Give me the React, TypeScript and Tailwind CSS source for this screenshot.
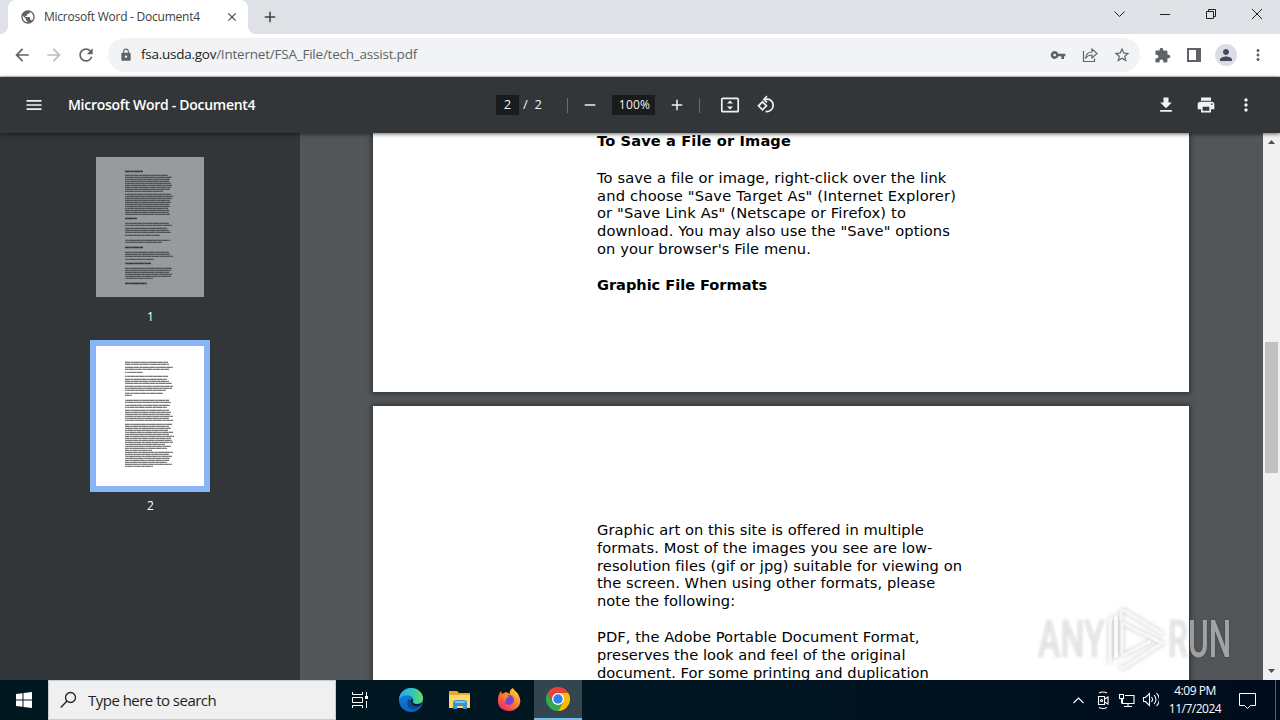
import type { ReactNode } from 'react';
import {
  MdAdd, MdArrowBack, MdArrowForward, MdClose, MdExtension, MdFileDownload, MdLock, MdMenu, MdMoreVert,
  MdPerson, MdPrint, MdPublic, MdRefresh, MdRemove, MdStarBorder, MdVpnKey,
} from 'react-icons/md';

function Cell({ className, children }: { className: string; children?: ReactNode }) {
  return <div className={`flex shrink-0 items-center justify-center ${className}`}>{children}</div>;
}

function TabStrip() {
  return (
    <div className="flex h-[34px] shrink-0 bg-[#dee1e6] text-[#3c4043]">
      <div className="flex w-2 items-end bg-white"><div className="h-full w-full rounded-br-lg bg-[#dee1e6]" /></div>
      <div className="flex w-60 items-center rounded-t-lg bg-white">
        <MdPublic className="ml-3 size-4 text-[#5f6368]" />
        <span className="ml-2 w-[173px] whitespace-nowrap font-['Open_Sans',sans-serif] text-[12px] tracking-[-0.24px]">Microsoft Word - Document4</span>
        <MdClose className="ml-2 size-3.5 text-[#45494d]" />
      </div>
      <div className="w-2 bg-white"><div className="h-full w-full rounded-bl-lg bg-[#dee1e6]" /></div>
      <Cell className="w-7"><MdAdd className="size-[18px]" /></Cell>
      <div className="flex-1" />
      <svg className="h-[34px] w-[172px]" viewBox="0 0 172 34" fill="none" stroke="#202124">
        <path d="M6.500 11.500l5 5 5-5M52 14.500h10M98.500 11.500h7v7h-7zM100.500 11.500v-2h7v7h-2M144 9l10 10M154 9l-10 10" />
      </svg>
    </div>
  );
}

function AddressBar() {
  return (
    <div className="flex h-[43px] shrink-0 items-center border-b border-[#d5d7da] bg-white text-[#5f6368]">
      <Cell className="ml-1.5 w-8"><MdArrowBack className="size-5" /></Cell>
      <Cell className="w-8"><MdArrowForward className="size-5 text-[#babcbe]" /></Cell>
      <Cell className="w-8"><MdRefresh className="size-5" /></Cell>
      <div className="ml-1.5 flex h-[34px] w-[1032px] items-center rounded-full bg-[#f1f3f4]">
        <MdLock className="ml-[11px] size-3.5" />
        <span className="mb-px ml-2 flex-1 whitespace-nowrap font-['Open_Sans',sans-serif] text-[13.5px] tracking-[-0.22px]">
          <span className="tracking-[-0.26px] text-[#202124]">fsa.usda.gov</span>/Internet/FSA_File/tech_assist.pdf
        </span>
        <Cell className="w-8"><MdVpnKey className="size-4" /></Cell>
        <Cell className="w-8">
          <svg className="size-4" viewBox="0 0 16 16" fill="none" stroke="currentColor" strokeWidth="1.2">
            <path d="M1.500 4v10.500h11v-3" />
            <path d="M3.500 11.500c.5-4.500 3-6.500 6.500-6.500V2l5 4.500-5 4.500V8c-3 0-5 1-6.500 3.500z" />
          </svg>
        </Cell>
        <Cell className="mr-0.5 w-8"><MdStarBorder className="size-[18px]" /></Cell>
      </div>
      <Cell className="ml-[6px] w-8"><MdExtension className="size-[17px]" /></Cell>
      <Cell className="w-8">
        <svg className="h-3.5 w-3.5" viewBox="0 0 14 14"><path fill="currentColor" fillRule="evenodd" d="M0 0h14v14H0zM2 2v10h7V2z" /></svg>
      </Cell>
      <Cell className="w-8"><Cell className="size-[22px] rounded-full bg-[#dadce6]"><MdPerson className="size-[18px] text-[#45495e]" /></Cell></Cell>
      <Cell className="w-8"><MdMoreVert className="size-[18px]" /></Cell>
    </div>
  );
}

function ViewerToolbar() {
  return (
    <div className="relative z-10 flex h-14 shrink-0 items-center bg-[#323639] font-['Open_Sans',sans-serif] text-[13px] text-[#f1f1f1] shadow-[0_1px_4px_rgba(0,0,0,0.6)]">
      <Cell className="ml-6 w-5"><MdMenu className="size-[22px]" /></Cell>
      <span className="mb-px ml-6 w-[428px] whitespace-nowrap text-[14px] font-semibold tracking-[-0.29px] text-white">Microsoft Word - Document4</span>
      <Cell className="h-5 w-[23px] bg-[#191b1c]">2</Cell>
      <span className="ml-1 w-[44px] whitespace-pre">/&nbsp; 2</span>
      <div className="h-[15px] w-px bg-[#6b6e70]" />
      <Cell className="ml-3 w-5"><MdRemove className="size-[18px]" /></Cell>
      <Cell className="ml-3 h-5 w-[43px] bg-[#191b1c] pl-0.5 text-[12px] tracking-[0.2px]">100%</Cell>
      <Cell className="ml-3 w-5"><MdAdd className="size-[18px]" /></Cell>
      <div className="ml-3 h-[15px] w-px bg-[#6b6e70]" />
      <Cell className="ml-5 w-5">
        <svg className="size-5" viewBox="0 0 20 20">
          <rect x="1.800" y="3.300" width="16.400" height="13.400" rx="1" fill="none" stroke="currentColor" strokeWidth="1.700" />
          <path fill="currentColor" d="M7 8.500l3-3 3 3zM7 11.500h6l-3 3z" />
        </svg>
      </Cell>
      <Cell className="ml-4 w-5">
        <svg className="size-5" viewBox="0 0 20 20" fill="none" stroke="currentColor" strokeWidth="1.700">
          <path d="M6.500 6.800l4 4-4 4-4-4z" />
          <path d="M9 4.400c5-1 8.200 2 8.200 5.800 0 4-3.600 7-7.700 6.300" />
          <path d="M11 1.200L7.900 4.400 11 7.400" />
        </svg>
      </Cell>
      <div className="flex-1" />
      <Cell className="w-10"><MdFileDownload className="size-5" /></Cell>
      <Cell className="w-10"><MdPrint className="size-5" /></Cell>
      <Cell className="mr-[14px] w-10"><MdMoreVert className="size-5" /></Cell>
    </div>
  );
}

type Row = [number, number, number?];

const firstPage: Row[] = [
  [14, 18, 1], [18, 43], [20, 47], [22, 45], [24, 44], [26, 46], [28, 47], [30, 46], [32, 45], [34, 38],
  [37, 46], [39, 48], [41, 47], [43, 45], [45, 46], [47, 44], [49, 45], [51, 43], [53, 44], [55, 44], [57, 45],
  [61, 12, 1], [66, 44], [68, 47], [71, 42], [73, 44], [75, 46], [78, 35], [83, 45], [85, 37], [90, 18, 1],
  [95, 44], [97, 45], [99, 48], [102, 29], [106, 26, 1], [111, 47], [113, 46], [115, 44], [117, 47], [119, 46],
  [121, 28], [126, 22, 1],
];
const secondPage: Row[] = [
  [16, 43], [18, 44], [21, 48], [23, 44], [26, 18], [30, 43], [33, 42], [35, 44], [37, 47], [40, 48],
  [42, 47], [44, 41], [47, 38], [49, 7], [54, 44], [56, 46], [59, 45], [61, 42], [64, 44], [66, 46], [68, 45],
  [70, 48], [72, 44], [74, 48], [78, 47], [80, 44], [82, 46], [84, 43], [86, 48], [88, 44], [90, 49],
  [92, 46], [94, 47], [96, 48], [98, 40], [100, 46], [102, 42], [104, 27], [106, 48], [108, 44], [110, 47],
  [112, 45], [114, 44], [116, 42], [118, 47], [120, 28],
];

function Thumb({ rows, dark }: { rows: Row[]; dark?: boolean }) {
  return (
    <svg className={dark ? 'h-[140px] w-[108px] bg-[#989b9d]' : 'h-[140px] w-[108px] bg-white'} viewBox="0 0 108 140">
      {rows.map(([y, w, bold], i) => (
        <g key={y} stroke={dark ? '#16181a' : '#111'} strokeWidth={bold ? 1.5 : 1.1}>
          <line x1="29" x2={29 + w} y1={y + 0.4} y2={y + 0.4} strokeOpacity={bold ? 0.5 : 0.38} />
          <line
            x1="29" x2={29 + w} y1={y + 0.4} y2={y + 0.4} strokeOpacity={bold ? 0.5 : 0.3}
            strokeDasharray={i % 2 ? '3 .9 5 1.3 2 .7 4 1.1' : '5 1.2 2 .9 6.3 .8'} strokeDashoffset={(i * 3.7) % 11}
          />
        </g>
      ))}
    </svg>
  );
}

function Sidebar() {
  return (
    <div className="flex w-[300px] shrink-0 flex-col items-center bg-[#323639] pt-6 font-['Open_Sans',sans-serif] text-[12px] text-white">
      <Thumb rows={firstPage} dark />
      <div className="mt-3 h-[31px] pl-px leading-4">1</div>
      <div className="bg-[#8ab4f8] p-1.5"><Thumb rows={secondPage} /></div>
      <div className="mt-[6px] pl-px leading-4">2</div>
    </div>
  );
}

const sheet = "w-[816px] shrink-0 bg-white pl-56 font-['DejaVu_Sans',sans-serif] text-[14.67px] leading-[17.75px] whitespace-nowrap text-black shadow-[0_0_5px_2px_rgba(0,0,0,0.35)]";

function Line({ className, children }: { className: string; children: ReactNode }) {
  return <div className={className}>{children}</div>;
}

function Pages() {
  return (
    <div className="flex w-[963px] flex-col overflow-hidden bg-[#525659] pl-[73px]">
      <div className={`h-[259px] ${sheet}`}>
        <div className="-mt-px text-[14.6px] font-bold tracking-[0.13px]">To Save a File or Image</div>
        <div className="mt-[19px]">
          <Line className="tracking-[0.12px]">To save a file or image, right-click over the link</Line>
          <Line className="tracking-[0.18px]">and choose "Save Target As" (Internet Explorer)</Line>
          <Line className="tracking-[0.14px]">or "Save Link As" (Netscape or Firefox) to</Line>
          <Line className="tracking-[0.1px]">download. You may also use the "Save" options</Line>
          <Line className="tracking-[0.1px]">on your browser's File menu.</Line>
        </div>
        <div className="mt-[18.2px] text-[14.6px] font-bold tracking-[-0.04px]">Graphic File Formats</div>
      </div>
      <div className={`mt-3.5 h-[400px] pt-[115px] ${sheet}`}>
        <Line className="tracking-[0.065px]">Graphic art on this site is offered in multiple</Line>
        <Line className="tracking-[0.09px]">formats. Most of the images you see are low-</Line>
        <Line className="tracking-[0.085px]">resolution files (gif or jpg) suitable for viewing on</Line>
        <Line className="tracking-[0.07px]">the screen. When using other formats, please</Line>
        <Line className="tracking-[0.05px]">note the following:</Line>
        <div className="mt-[18.5px]">
          <Line className="tracking-[0.075px]">PDF, the Adobe Portable Document Format,</Line>
          <Line className="tracking-[0.035px]">preserves the look and feel of the original</Line>
          <Line className="tracking-[0.03px]">document. For some printing and duplication</Line>
        </div>
      </div>
    </div>
  );
}

function Scrollbar() {
  return (
    <div className="flex w-[17px] shrink-0 flex-col items-center bg-[#f1f1f1]">
      <svg className="h-[17px] w-[17px]" viewBox="0 0 17 17"><path fill="#505050" d="M5 11l3.500-4 3.500 4z" /></svg>
      <div className="mt-[192px] h-[131px] w-[13px] bg-[#c1c1c1]" />
      <div className="flex-1" />
      <svg className="h-[17px] w-[17px]" viewBox="0 0 17 17"><path fill="#505050" d="M5 6l3.500 4L12 6z" /></svg>
    </div>
  );
}

function Watermark() {
  return (
    <div className="absolute top-[608px] left-[1038px] z-20 flex h-16 w-[196px] items-center font-['Roboto',sans-serif] text-[52px] leading-none font-medium text-white/50 [text-shadow:0_0_3px_rgba(0,0,0,0.22)]">
      <div className="w-[67px]"><span className="inline-block origin-left scale-x-[0.65]">ANY</span></div>
      <svg className="h-16 w-[63px] shrink-0 overflow-visible drop-shadow-[0_0_2px_rgba(0,0,0,0.3)]" viewBox="0 0 63 64" fill="none" stroke="white" strokeOpacity="0.7" strokeWidth="3.500">
        <path d="M5 55V14c0-2 1-3 3-4" />
        <path d="M11 50V7" />
        <path d="M11 50V8M16 12V4c0-2 2-3 4-1l38 23" />
        <path d="M17 46V15l40 20-37 24c-3 2-5 1-5-2" />
        <path d="M17 48l29-15" />
      </svg>
      <div className="w-[65px]"><span className="inline-block origin-left scale-x-[0.61]">RUN</span></div>
    </div>
  );
}

function Edge() {
  return (
    <svg className="size-6" viewBox="0 0 24 24">
      <defs>
        <linearGradient id="edgeTop" x1="0" x2="1"><stop stopColor="#2aa8ee" /><stop offset=".6" stopColor="#30c9b4" /><stop offset="1" stopColor="#70db57" /></linearGradient>
        <linearGradient id="edgeBase" x1="0" x2="0" y1="0" y2="1"><stop stopColor="#168bdc" /><stop offset="1" stopColor="#0962c6" /></linearGradient>
      </defs>
      <circle cx="12" cy="12" r="12" fill="url(#edgeBase)" />
      <path d="M0 11C1 4 6 0 12 0c7 0 12 5 12 10 0 4-3 6-6 6-3 0-5-1-4-3 2-5-7-9-14-2z" fill="url(#edgeTop)" />
      <path d="M9 11c-3 6 2 12 8 10 3-1 4-3 5-4-5 3-11 0-10-5z" fill="#114a8b" />
      <path d="M14 13c-1 2 1 3 4 3s4-1 5-2l-1 3c-5 3-11 0-10-5 0-1 3-1 2 1z" fill="#051b2a" />
    </svg>
  );
}

function Folder() {
  return (
    <svg className="h-5 w-[22px]" viewBox="0 0 22 20">
      <path fill="#e9a92c" d="M0 1h8l2 2h11v15H0z" />
      <path fill="#ffd767" d="M0 5h21v13H0z" />
      <path fill="#3c91cf" d="M4 19v-7l2-2h10l2 2v7h-4v-3H8v3z" />
      <path fill="#79c5ed" d="M6 11h10v2H6z" />
    </svg>
  );
}

function Firefox() {
  return (
    <svg className="size-6" viewBox="0 0 24 24">
      <defs><linearGradient id="fox" x1="1" x2=".2" y1="0" y2="1"><stop stopColor="#fff04a" /><stop offset=".45" stopColor="#ff8a24" /><stop offset="1" stopColor="#f2246b" /></linearGradient></defs>
      <path fill="url(#fox)" d="M1 11c0-3 1-5 3-8l1 3 4-2 4 2c-1-3 1-5 3-6 1 3 5 4 6 8 4 8-2 15-10 15C5 23 0 18 1 11z" />
      <circle cx="12" cy="12" r="5" fill="#7444d8" />
      <path fill="#ff7e29" d="M5 6c3-1 5 0 7 3l-2 1c-1 1-2 2-1 4-3-1-4-4-4-8z" />
    </svg>
  );
}

function Chrome() {
  return (
    <svg className="size-6" viewBox="0 0 24 24">
      <path fill="#ea4335" d="M1.600 6A12 12 0 0 1 22.400 6H12L6.800 15z" />
      <path fill="#fbbc04" d="M22.400 6A12 12 0 0 1 12 24l5.200-9L12 6z" />
      <path fill="#34a853" d="M1.600 6A12 12 0 0 0 12 24l5.200-9H6.800z" />
      <circle cx="12" cy="12" r="6" fill="white" />
      <circle cx="12" cy="12" r="4.700" fill="#367df0" />
    </svg>
  );
}

function Taskbar() {
  return (
    <div className="flex h-10 shrink-0 bg-gradient-to-r from-[#001820] via-[#001622] to-[#000c1c] text-white">
      <Cell className="w-12">
        <svg className="size-4" viewBox="0 0 16 16"><path fill="white" d="M0 2l6.500-.8v6.300H0zM7.500 1.100L16 0v7.500H7.500zM0 8.500h6.500v6.300L0 14zM7.500 8.500H16V16l-8.500-1.100z" /></svg>
      </Cell>
      <div className="flex w-72 items-center border border-[#ccc] bg-[#f0f0f0] text-[#222]">
        <svg className="ml-[11px] size-[18px]" viewBox="0 0 18 18" fill="none" stroke="#222" strokeWidth="1.300"><circle cx="10.500" cy="6.500" r="5" /><path d="M7 10L.8 16.500" /></svg>
        <span className="ml-[10px] whitespace-nowrap font-['Open_Sans',sans-serif] text-[15px] tracking-[-0.52px]">Type here to search</span>
      </div>
      <Cell className="w-12">
        <svg className="h-[18px] w-[18px]" viewBox="0 0 18 18" fill="none" stroke="white">
          <path d="M1.500 1v2.500h10V1M1.500 17v-2.500h10V17M1.500 6.500h10v5h-10zM15.500 1v4M15.500 10v7" />
          <path fill="white" stroke="none" d="M14 5h3v3h-3z" />
        </svg>
      </Cell>
      <Cell className="ml-[3px] w-12"><Edge /></Cell>
      <Cell className="w-[50px]"><Folder /></Cell>
      <Cell className="w-[47px]"><Firefox /></Cell>
      <Cell className="ml-[2px] w-12 border-b-2 border-[#76b9ed] bg-[#334650]"><Chrome /></Cell>
      <div className="flex-1" />
      <svg className="h-10 w-[88px]" viewBox="0 0 88 40" fill="none" stroke="white" strokeWidth="1.100">
        <path d="M2.500 23l5-5 5 5" />
        <path d="M27.500 16.500h6v8h-6zM33.500 19l3.500-2v7l-3.500-2M28 13q4-2 8 0M28 27.500q4 2 8 0" />
        <circle cx="30.500" cy="20.500" r="1" />
        <path d="M54 15.500h9v8H51.500V19M57 23.500v3M53 26.500h8M48.500 14.500h4v4h-4zM50.500 18.500v5" />
        <path d="M72.500 17.500h2l4-4v12l-4-4h-2zM80.500 17q2 2.500 0 5M83 15q4 4.500 0 9M85.500 13q6 6.500 0 13" />
      </svg>
      <div className="flex w-[72px] flex-col items-center pt-0.5 font-['Open_Sans',sans-serif] text-[12px] leading-[18px] whitespace-nowrap">
        <div className="tracking-[-0.45px]">4:09 PM</div>
        <div className="tracking-[-0.5px]">11/7/2024</div>
      </div>
      <Cell className="w-8">
        <svg className="h-[17px] w-[17px]" viewBox="0 0 17 17" fill="none" stroke="white"><path d="M.5 1.500h16v12h-5l-3 3-3-3h-5z" /></svg>
      </Cell>
      <div className="mr-1 ml-[12px] w-px bg-[#56616b]" />
    </div>
  );
}

export default function App() {
  return (
    <div className="relative flex h-[720px] w-[1280px] flex-col overflow-hidden">
      <TabStrip />
      <AddressBar />
      <ViewerToolbar />
      <div className="flex h-[547px] shrink-0">
        <Sidebar />
        <Pages />
        <Scrollbar />
      </div>
      <Taskbar />
      <Watermark />
    </div>
  );
}
